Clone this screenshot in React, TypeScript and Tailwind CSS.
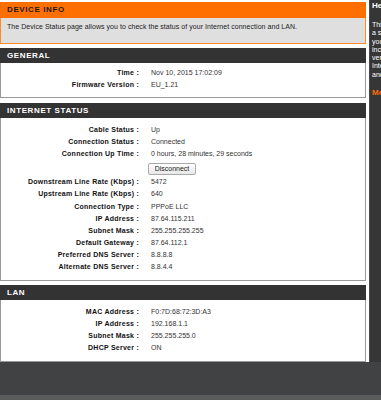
const font = { fontFamily: '"Liberation Sans", Arial, sans-serif' };

type Row = { label: string; value: string };

const general: Row[] = [
  { label: 'Time :', value: 'Nov 10, 2015 17:02:09' },
  { label: 'Firmware Version :', value: 'EU_1.21' },
];

const internetTop: Row[] = [
  { label: 'Cable Status :', value: 'Up' },
  { label: 'Connection Status :', value: 'Connected' },
  { label: 'Connection Up Time :', value: '0 hours, 28 minutes, 29 seconds' },
];

const internetRates: Row[] = [
  { label: 'Downstream Line Rate (Kbps) :', value: '5472' },
  { label: 'Upstream Line Rate (Kbps) :', value: '640' },
];

const internetInfo: Row[] = [
  { label: 'Connection Type :', value: 'PPPoE LLC' },
  { label: 'IP Address :', value: '87.64.115.211' },
  { label: 'Subnet Mask :', value: '255.255.255.255' },
  { label: 'Default Gateway :', value: '87.64.112.1' },
  { label: 'Preferred DNS Server :', value: '8.8.8.8' },
  { label: 'Alternate DNS Server :', value: '8.8.4.4' },
];

const lan: Row[] = [
  { label: 'MAC Address :', value: 'F0:7D:68:72:3D:A3' },
  { label: 'IP Address :', value: '192.168.1.1' },
  { label: 'Subnet Mask :', value: '255.255.255.0' },
  { label: 'DHCP Server :', value: 'ON' },
];

const hints = [
  'This page displays',
  'a summary of',
  'your device status,',
  'including firmware',
  'version, uptime,',
  'Internet details',
  'and LAN settings.',
];

function StatusRow({ label, value }: Row) {
  return (
    <div className="flex h-[12px] items-center text-[7px] leading-[12px]">
      <span className="w-[138px] shrink-0 text-right font-bold tracking-[0.25px] text-[#111]">{label}</span>
      <span className="ml-[12px] whitespace-nowrap text-[#333]">{value}</span>
    </div>
  );
}

function SectionHeader({ title }: { title: string }) {
  return (
    <div className="flex h-[15px] items-center bg-[#333333] pl-[7px] text-[8px] font-bold tracking-[0.6px] text-white">
      {title}
    </div>
  );
}

export default function App() {
  return (
    <div className="flex h-[400px] w-[381px] flex-col overflow-hidden bg-[#404243]" style={font}>
      <div className="flex h-[362px] shrink-0">
        <main className="flex w-[369px] shrink-0 flex-col bg-white pr-[3px] pt-[2px]">
          <div className="flex h-[16px] items-center bg-[#ff6f00] pl-[7px] text-[8px] font-bold tracking-[0.6px] text-[#1a1a1a]">
            DEVICE INFO
          </div>
          <div className="h-[26px] border border-t-0 border-[#ff8a2a] bg-[#dfdfdf] pl-[6px] pt-[4px] text-[7px] leading-[10px] tracking-[0.05px] text-[#222]">
            The Device Status page allows you to check the status of your Internet connection and LAN.
          </div>

          <div className="mt-[4px]">
            <SectionHeader title="GENERAL" />
            <div className="h-[35px] border-x border-b border-[#9a9a9a] pt-[4px]">
              {general.map((row) => (
                <StatusRow key={row.label} {...row} />
              ))}
            </div>
          </div>

          <div className="mt-[5px]">
            <SectionHeader title="INTERNET STATUS" />
            <div className="h-[163px] border-x border-b border-[#9a9a9a] pt-[6px]">
              {internetTop.map((row) => (
                <StatusRow key={row.label} {...row} />
              ))}
              <div className="ml-[147px] mt-[3px] flex h-[12px] w-[48px] items-center justify-center rounded-[2px] border border-[#aaa] bg-gradient-to-b from-white to-[#e8e8e8] text-[7px] text-[#222]">
                Disconnect
              </div>
              <div className="mt-[1px]">
                {internetRates.map((row) => (
                  <StatusRow key={row.label} {...row} />
                ))}
              </div>
              <div className="mt-[1px]">
                {internetInfo.map((row) => (
                  <StatusRow key={row.label} {...row} />
                ))}
              </div>
            </div>
          </div>

          <div className="mt-[4px]">
            <SectionHeader title="LAN" />
            <div className="h-[62px] border-x border-b border-[#9a9a9a] pt-[6px]">
              {lan.map((row) => (
                <StatusRow key={row.label} {...row} />
              ))}
            </div>
          </div>
        </main>

        <aside className="flex-1 overflow-hidden border-l border-[#4a4a4a] bg-[#363636] pl-[2px] pt-[1px]">
          <div className="whitespace-nowrap text-[8px] font-bold leading-[10px] text-white">Helpful Hints..</div>
          <div className="mt-[10px]">
            {hints.map((line) => (
              <div key={line} className="whitespace-nowrap text-[7px] leading-[8.3px] text-white">
                {line}
              </div>
            ))}
          </div>
          <div className="mt-[8px] whitespace-nowrap text-[8px] font-bold text-[#ff6f00]">More...</div>
        </aside>
      </div>
      <div className="h-[33px] shrink-0 bg-[#404243]" />
      <div className="h-[5px] shrink-0 bg-[#5a5b5b]" />
    </div>
  );
}
